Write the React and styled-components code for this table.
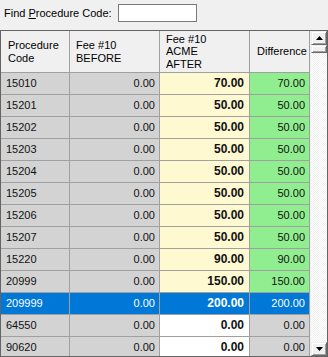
import React from "react";
import styled, { createGlobalStyle, css } from "styled-components";

const Global = createGlobalStyle`
  html, body { margin: 0; padding: 0; background: #f0f0f0; }
  body { font-family: "Liberation Sans", Arial, sans-serif; font-size: 11px; color: #000; }
  * { box-sizing: border-box; }
`;

const Page = styled.div`
  width: 328px;
  height: 357px;
  display: flex;
  flex-direction: column;
  background: #f0f0f0;
  overflow: hidden;
`;

const FindBar = styled.div`
  height: 30px;
  display: flex;
  align-items: flex-start;
  padding: 6px 0 0 4px;
  gap: 6px;
`;

const Label = styled.label`
  font-size: 11px;
  line-height: 14px;
  color: #000;
  u { text-decoration: underline; }
`;

const SearchBox = styled.div`
  margin-top: -2px;
  width: 79px;
  height: 18px;
  background: #fff;
  border: 1px solid #7a7a7a;
`;

const Grid = styled.div`
  height: 327px;
  border: 1px solid #646464;
  display: flex;
  overflow: hidden;
`;

const Table = styled.div`
  width: 309px;
  display: grid;
  grid-template-columns: 69px 90px 90px 60px;
  grid-auto-rows: 22px;
  grid-template-rows: 42px;
  align-content: start;
`;

const HeadCell = styled.div`
  background: #f0f0f0;
  border-right: 1px solid #a0a0a0;
  border-bottom: 1px solid #a0a0a0;
  padding: 0 4px 0 ${p => p.$pl || 6}px;
  display: flex;
  align-items: center;
  font-size: 11px;
  line-height: 12.5px;
  color: #000;
  white-space: pre-line;
`;

const bg = {
  gray: "#d3d3d3",
  yellow: "#fff9d2",
  green: "#90ee90",
  white: "#ffffff",
  sel: "#0078d7",
};

const Cell = styled.div`
  background: ${p => (p.$selected ? bg.sel : bg[p.$tone])};
  color: ${p => (p.$selected ? "#fff" : "#111")};
  border-right: 1px solid #a0a0a0;
  border-bottom: 1px solid #a0a0a0;
  display: flex;
  align-items: center;
  padding: 0 ${p => (p.$right ? "4px" : "0")} 1px ${p => (p.$right ? "0" : "5px")};
  justify-content: ${p => (p.$right ? "flex-end" : "flex-start")};
  font-size: 11px;
  font-weight: ${p => (p.$bold ? 700 : 400)};
  ${p => p.$bold && css`font-size: 12px; padding-right: 5px;`}
  white-space: nowrap;
`;

const ScrollBar = styled.div`
  width: 17px;
  display: flex;
  flex-direction: column;
  background-color: #f0f0f0;
  background-image: repeating-conic-gradient(#ffffff 0 25%, #f0f0f0 0 50%);
  background-size: 2px 2px;
  border-left: 1px solid #f0f0f0;
`;

const raised = css`
  background: #f0f0f0;
  border-top: 1px solid #f0f0f0;
  border-left: 1px solid #f0f0f0;
  border-right: 1px solid #696969;
  border-bottom: 1px solid #696969;
  box-shadow: inset 1px 1px 0 #ffffff, inset -1px -1px 0 #a0a0a0;
`;

const ScrollBtn = styled.div`
  ${raised}
  height: 14px;
  display: flex;
  align-items: center;
  justify-content: center;
  svg { display: block; }
`;

const Thumb = styled.div`
  ${raised}
  height: 8px;
`;

const Spacer = styled.div`
  flex: 1;
`;

const Arrow = ({ up }) => (
  <svg width="7" height="4" viewBox="0 0 7 4">
    {up ? <path d="M3.5 0 L7 4 L0 4 Z" fill="#000" /> : <path d="M0 0 L7 0 L3.5 4 Z" fill="#000" />}
  </svg>
);

const rows = [
  ["15010", "70.00"],
  ["15201", "50.00"],
  ["15202", "50.00"],
  ["15203", "50.00"],
  ["15204", "50.00"],
  ["15205", "50.00"],
  ["15206", "50.00"],
  ["15207", "50.00"],
  ["15220", "90.00"],
  ["20999", "150.00"],
  ["209999", "200.00", true],
  ["64550", "0.00", false, true],
  ["90620", "0.00", false, true],
];

export default function App() {
  return (
    <Page>
      <Global />
      <FindBar>
        <Label>
          Find <u>P</u>rocedure Code:
        </Label>
        <SearchBox />
      </FindBar>
      <Grid>
        <Table>
          <HeadCell $pl={7}>{"Procedure\nCode"}</HeadCell>
          <HeadCell>{"Fee #10\nBEFORE"}</HeadCell>
          <HeadCell>{"Fee #10\nACME\nAFTER"}</HeadCell>
          <HeadCell $pl={7}>Difference</HeadCell>
          {rows.map(([code, after, sel, zero]) => (
            <React.Fragment key={code}>
              <Cell $tone="gray" $selected={sel}>{code}</Cell>
              <Cell $tone="gray" $selected={sel} $right>0.00</Cell>
              <Cell $tone={zero ? "white" : "yellow"} $selected={sel} $right $bold>{after}</Cell>
              <Cell $tone={zero ? "gray" : "green"} $selected={sel} $right>{after}</Cell>
            </React.Fragment>
          ))}
        </Table>
        <ScrollBar>
          <ScrollBtn><Arrow up /></ScrollBtn>
          <Thumb />
          <Spacer />
          <ScrollBtn><Arrow /></ScrollBtn>
        </ScrollBar>
      </Grid>
    </Page>
  );
}
